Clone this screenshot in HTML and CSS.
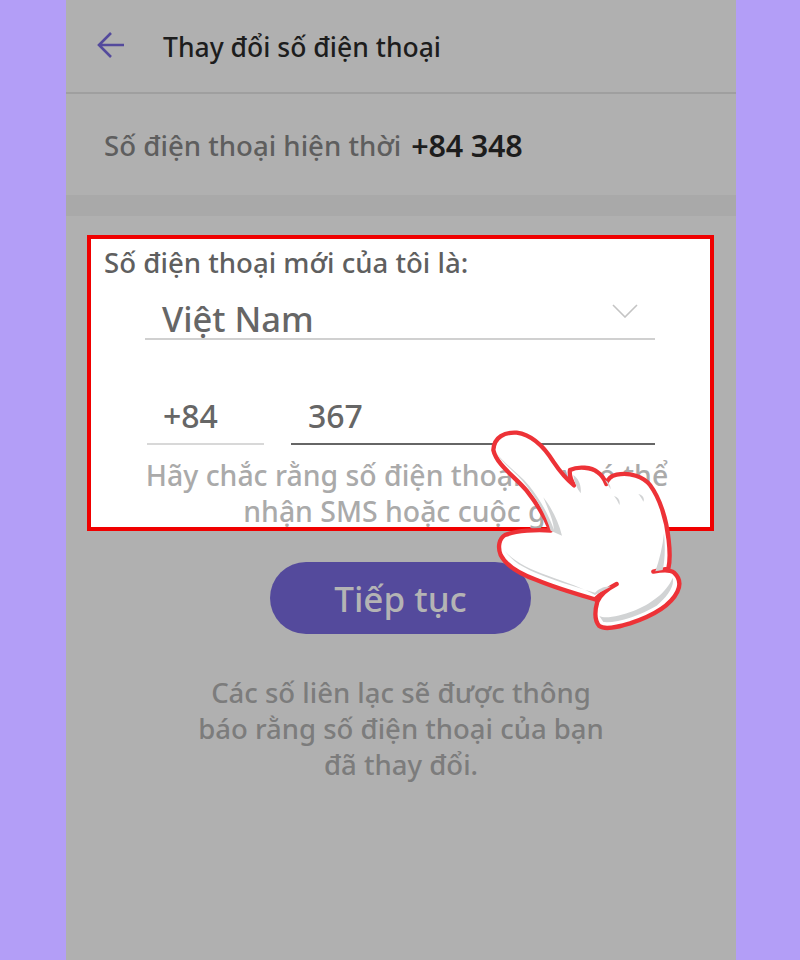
FILE: index.html
```html
<!DOCTYPE html>
<html lang="vi">
<head>
<meta charset="utf-8">
<title>Thay đổi số điện thoại</title>
<link rel="stylesheet" href="styles.css">
</head>
<body>
<main class="app">
  <header class="topbar">
    <svg class="back" viewBox="0 0 28 28" aria-hidden="true"><path d="M27 14H2M14 2 2 14l12 12" fill="none" stroke="#544a9c" stroke-width="2.6"/></svg>
    <h1 class="title">Thay đổi số điện thoại</h1>
  </header>
  <div class="current"><span class="current-label">Số điện thoại hiện thời</span> <b class="current-num">+84 348</b></div>
  <div class="band"></div>
  <section class="card">
    <p class="card-label">Số điện thoại mới của tôi là:</p>
    <div class="select">
      <span class="country">Việt Nam</span>
      <svg class="chev" viewBox="0 0 26 14" aria-hidden="true"><path d="M1 1l12 12L25 1" fill="none" stroke="#c4c4c4" stroke-width="1.6"/></svg>
    </div>
    <div class="phone">
      <div class="code">+84</div>
      <div class="number">367</div>
    </div>
    <p class="hint">Hãy chắc rằng số điện thoại này có thể<br>nhận SMS hoặc cuộc gọi</p>
  </section>
  <button class="next">Tiếp tục</button>
  <p class="note">Các số liên lạc sẽ được thông<br>báo rằng số điện thoại của bạn<br>đã thay đổi.</p>
</main>
<svg class="hand" viewBox="0 0 660 660" aria-hidden="true">
  <path d="M40 90C42 50 75 36 110 38C160 45 195 85 220 125C240 155 262 180 282 196C270 175 268 160 270 150C295 138 335 142 352 156C365 165 374 178 379 192C382 178 392 168 410 164C450 156 490 170 510 195C540 235 560 300 566 360C570 395 570 425 565 446C545 450 530 452 520 455C545 450 570 448 582 458C600 475 602 495 592 515C570 560 510 590 450 610C410 622 375 630 358 618C342 600 345 570 352 545C360 525 385 505 410 492C385 505 365 520 345 538C300 525 230 505 170 480C120 462 80 440 62 405C52 380 58 355 75 345C110 332 170 328 212 332C195 290 170 250 140 212C105 170 50 135 40 90Z" fill="#fff" stroke="#ed3237" stroke-width="13" stroke-linejoin="round"/>
  <path d="M52 103C72 135 112 160 140 198C172 240 196 282 212 332L246 347C236 305 214 262 190 232C205 270 220 300 222 330C205 280 175 232 148 198C118 162 78 135 52 103ZM74 392C100 425 150 448 200 466C260 488 310 505 345 525L392 500C372 498 356 508 345 518C280 498 180 470 130 440C105 428 88 410 74 392ZM358 588C375 598 420 588 460 573C510 553 560 518 578 473C585 500 560 532 530 557C480 587 410 610 370 606ZM280 165C295 175 305 195 302 220C290 205 282 185 280 165ZM375 180C385 185 392 195 392 208ZM402 228C415 232 422 242 418 255C414 245 408 235 402 228ZM475 222C488 225 495 235 490 245C486 236 480 228 475 222ZM552 340C556 385 555 420 548 450L526 454C538 420 548 380 552 340Z" fill="#d1d3d4"/>
</svg>
</body>
</html>
```

FILE: styles.css
```css
* { box-sizing: border-box; }
html, body { margin: 0; height: 960px; overflow: hidden; }
body {
  position: relative;
  background: #b39ef7;
  font-family: "Noto Sans", "Liberation Sans", sans-serif;
}
.app {
  width: 670px;
  height: 960px;
  margin-left: 66px;
  background: #b0b0b0;
  display: flex;
  flex-direction: column;
}
.topbar {
  height: 94px;
  border-bottom: 2px solid #9f9f9f;
  display: flex;
  align-items: center;
  padding: 0 0 0 31px;
  flex: none;
}
.back { width: 28px; height: 28px; margin-top: -2px; }
.title {
  margin: 0 0 0 38px;
  padding-top: 2px;
  font-size: 26.5px;
  font-weight: 500;
  color: #1d1d1d;
}
.current {
  height: 101px;
  display: flex;
  align-items: center;
  gap: 10px;
  padding-left: 38px;
  flex: none;
}
.current-label { font-size: 27.6px; font-weight: 500; color: #5e5e5e; }
.current-num { font-size: 30.5px; font-weight: 600; color: #1d1d1d; letter-spacing: -0.2px; }
.band { height: 21px; background: #a9a9a9; flex: none; }
.card {
  margin: 19px 22px 0 21px;
  height: 296px;
  background: #fff;
  border: 4px solid #f00000;
  flex: none;
  position: relative;
}
.card-label {
  margin: 0;
  padding: 4px 0 0 13px;
  font-size: 27.6px;
  font-weight: 500;
  line-height: 38px;
  color: #5f5f5f;
}
.select {
  margin: 12px 55px 0 54px;
  height: 47px;
  border-bottom: 2px solid #d0d0d0;
  display: flex;
  justify-content: space-between;
  align-items: flex-start;
  padding: 0 17px;
}
.country { font-size: 34.5px; font-weight: 500; line-height: 52px; color: #666; white-space: nowrap; }
.chev { width: 26px; height: 14px; margin: 11px 0 0; }
.phone {
  margin: 49px 55px 0 56px;
  display: flex;
  gap: 27px;
}
.code, .number {
  height: 56px;
  font-size: 32px;
  font-weight: 500;
  line-height: 54px;
  color: #666;
  padding-left: 16px;
}
.code { width: 117px; border-bottom: 2px solid #d8d8d8; }
.number { flex: 1; border-bottom: 2px solid #666; padding-left: 17px; }
.hint {
  margin: 12px 0 0 20px;
  width: 592px;
  text-align: center;
  font-size: 28.4px;
  font-weight: 500;
  line-height: 36px;
  color: #aaa;
  white-space: nowrap;
}
.next {
  align-self: flex-start;
  margin: 31px 0 0 204px;
  width: 261px;
  height: 72px;
  border: 0;
  border-radius: 36px;
  background: #544a9c;
  color: #b4b4b4;
  font: 500 35px "Noto Sans", sans-serif;
  flex: none;
}
.note {
  margin: 41px 0 0;
  text-align: center;
  font-size: 27.5px;
  font-weight: 500;
  line-height: 36px;
  color: #7c7c7c;
}
.hand {
  position: absolute;
  left: 480px;
  top: 420px;
  width: 220px;
  height: 220px;
}
```
